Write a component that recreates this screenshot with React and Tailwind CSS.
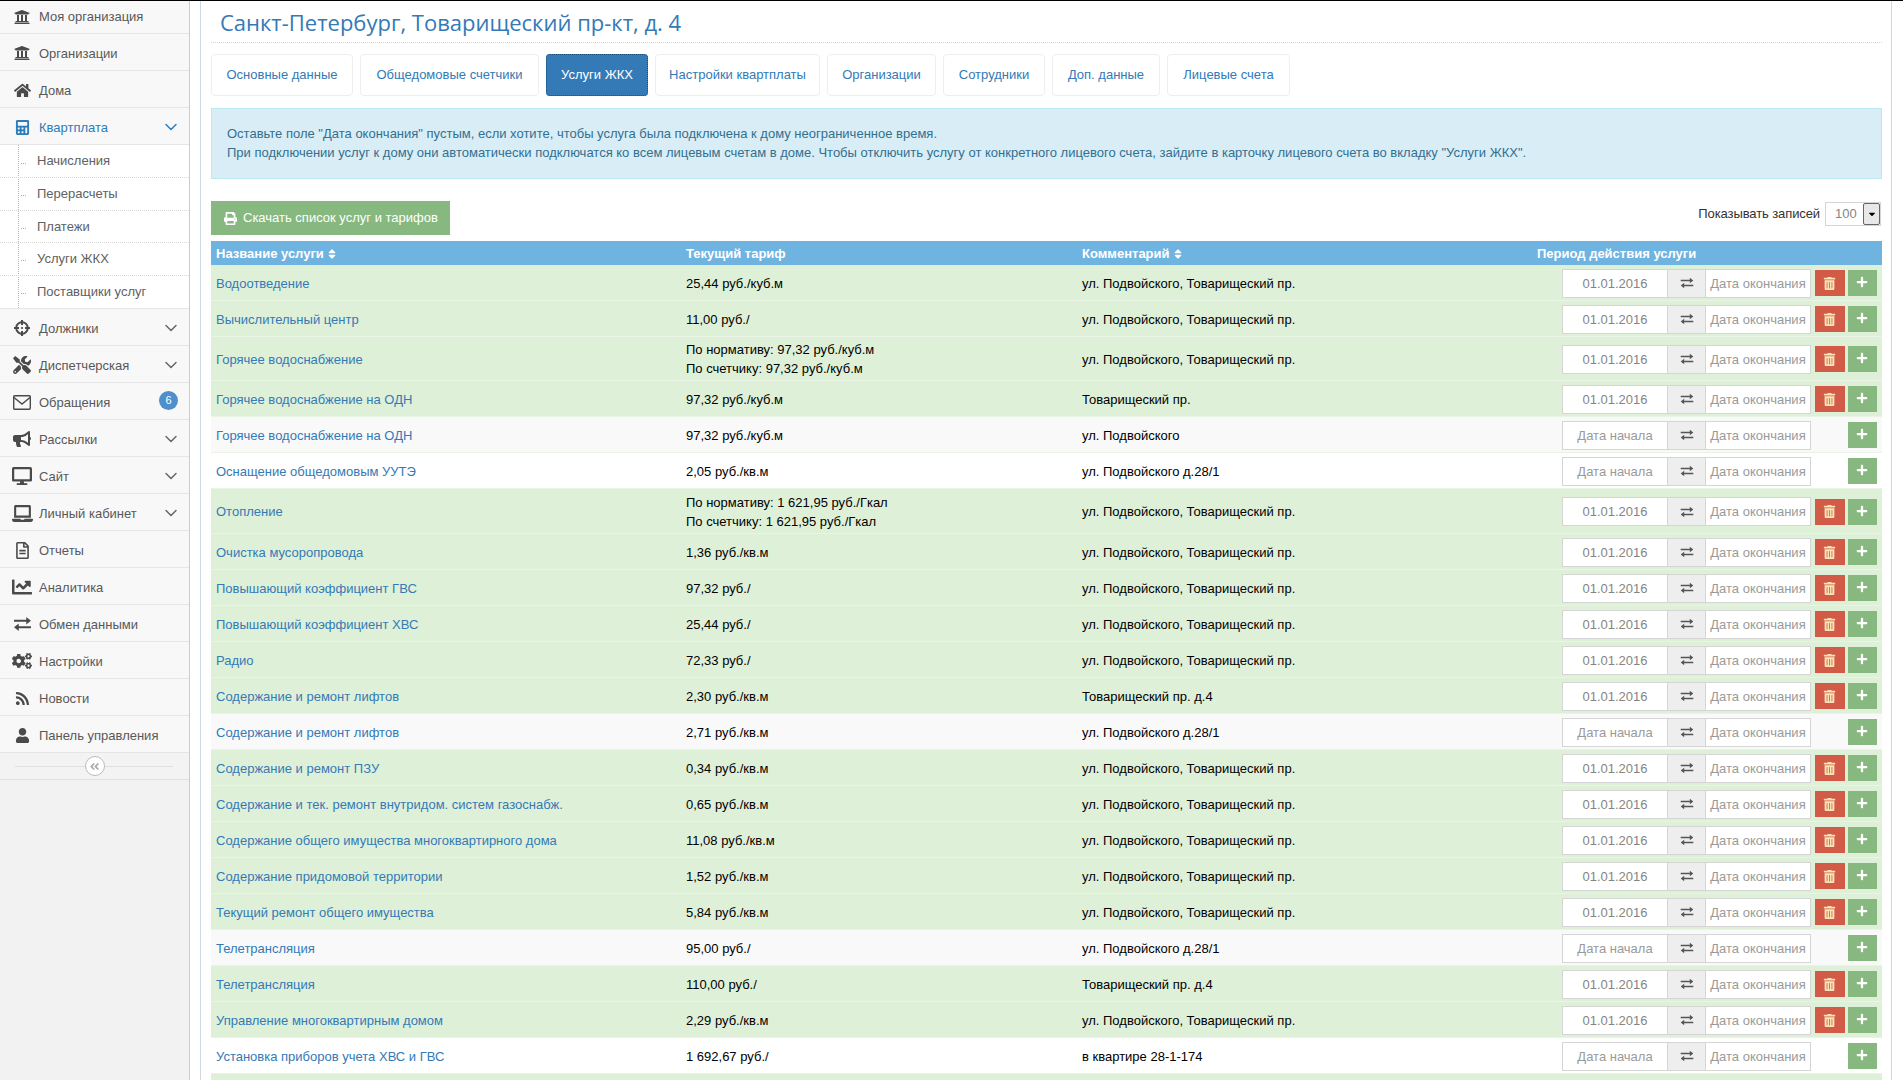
import React from 'react'
import { ChevronDown } from 'lucide-react'
import {
  FaUniversity, FaHome, FaCalculator, FaCrosshairs, FaTools, FaBullhorn,
  FaDesktop, FaLaptop, FaRegFileAlt, FaChartLine, FaCogs, FaRss, FaUser,
  FaPrint, FaTrashAlt, FaPlus, FaSort, FaAngleDoubleLeft, FaCaretDown,
} from 'react-icons/fa'

// fa-exchange из старого Font Awesome, в пакете такого нет
const ExchangeIcon = ({ className }) => (
  <svg viewBox="0 0 20 17" fill="currentColor" className={className}>
    <path d="M1 4h13V1l5 4-5 4V6H1z" />
    <path d="M19 11H6V8l-5 4 5 4v-3h13z" />
  </svg>
)

const EnvelopeIcon = ({ className }) => (
  <svg viewBox="0 0 18 15" fill="none" stroke="currentColor" strokeWidth="1.4" className={className}>
    <rect x="0.7" y="0.7" width="16.6" height="13.6" rx="1" />
    <path d="M1 2.5l8 6.5 8-6.5" />
  </svg>
)

const menuTop = [
  { label: 'Моя организация', icon: FaUniversity, size: 'text-[16px]', h: 'h-[33px]', first: true },
  { label: 'Организации', icon: FaUniversity, size: 'text-[16px]' },
  { label: 'Дома', icon: FaHome, size: 'text-[17px]' },
]

const subMenu = ['Начисления', 'Перерасчеты', 'Платежи', 'Услуги ЖКХ', 'Поставщики услуг']

const menuBottom = [
  { label: 'Должники', icon: FaCrosshairs, size: 'text-[16px]', arrow: true },
  { label: 'Диспетчерская', icon: FaTools, size: 'text-[18px]', arrow: true },
  { label: 'Обращения', icon: EnvelopeIcon, size: 'w-[18px] h-[15px]', badge: 6 },
  { label: 'Рассылки', icon: FaBullhorn, size: 'text-[18px]', arrow: true },
  { label: 'Сайт', icon: FaDesktop, size: 'text-[20px]', arrow: true },
  { label: 'Личный кабинет', icon: FaLaptop, size: 'text-[21px]', arrow: true },
  { label: 'Отчеты', icon: FaRegFileAlt, size: 'text-[17px]' },
  { label: 'Аналитика', icon: FaChartLine, size: 'text-[20px]' },
  { label: 'Обмен данными', icon: ExchangeIcon, size: 'w-[19px] h-[16px]' },
  { label: 'Настройки', icon: FaCogs, size: 'text-[20px]' },
  { label: 'Новости', icon: FaRss, size: 'text-[15px]' },
  { label: 'Панель управления', icon: FaUser, size: 'text-[15px]' },
]

const tabs = [
  { label: 'Основные данные', w: 'w-[142px]' },
  { label: 'Общедомовые счетчики', w: 'w-[179px]' },
  { label: 'Услуги ЖКХ', w: 'w-[102px]', active: true },
  { label: 'Настройки квартплаты', w: 'w-[165px]' },
  { label: 'Организации', w: 'w-[109px]' },
  { label: 'Сотрудники', w: 'w-[102px]' },
  { label: 'Доп. данные', w: 'w-[108px]' },
  { label: 'Лицевые счета', w: 'w-[123px]' },
]

const PV = 'ул. Подвойского, Товарищеский пр.'

// on = услуга подключена (зеленая строка)
const services = [
  { name: 'Водоотведение', tariff: ['25,44 руб./куб.м'], comment: PV, on: true, h: 'h-[35px]' },
  { name: 'Вычислительный центр', tariff: ['11,00 руб./'], comment: PV, on: true },
  { name: 'Горячее водоснабжение', tariff: ['По нормативу: 97,32 руб./куб.м', 'По счетчику: 97,32 руб./куб.м'], comment: PV, on: true, h: 'h-[44px]' },
  { name: 'Горячее водоснабжение на ОДН', tariff: ['97,32 руб./куб.м'], comment: 'Товарищеский пр.', on: true },
  { name: 'Горячее водоснабжение на ОДН', tariff: ['97,32 руб./куб.м'], comment: 'ул. Подвойского', bg: 'bg-[#f9f9f9]' },
  { name: 'Оснащение общедомовым УУТЭ', tariff: ['2,05 руб./кв.м'], comment: 'ул. Подвойского д.28/1', bg: 'bg-white' },
  { name: 'Отопление', tariff: ['По нормативу: 1 621,95 руб./Гкал', 'По счетчику: 1 621,95 руб./Гкал'], comment: PV, on: true, h: 'h-[45px]' },
  { name: 'Очистка мусоропровода', tariff: ['1,36 руб./кв.м'], comment: PV, on: true },
  { name: 'Повышающий коэффициент ГВС', tariff: ['97,32 руб./'], comment: PV, on: true },
  { name: 'Повышающий коэффициент ХВС', tariff: ['25,44 руб./'], comment: PV, on: true },
  { name: 'Радио', tariff: ['72,33 руб./'], comment: PV, on: true },
  { name: 'Содержание и ремонт лифтов', tariff: ['2,30 руб./кв.м'], comment: 'Товарищеский пр. д.4', on: true },
  { name: 'Содержание и ремонт лифтов', tariff: ['2,71 руб./кв.м'], comment: 'ул. Подвойского д.28/1', bg: 'bg-[#f9f9f9]' },
  { name: 'Содержание и ремонт ПЗУ', tariff: ['0,34 руб./кв.м'], comment: PV, on: true },
  { name: 'Содержание и тек. ремонт внутридом. систем газоснабж.', tariff: ['0,65 руб./кв.м'], comment: PV, on: true },
  { name: 'Содержание общего имущества многоквартирного дома', tariff: ['11,08 руб./кв.м'], comment: PV, on: true },
  { name: 'Содержание придомовой территории', tariff: ['1,52 руб./кв.м'], comment: PV, on: true },
  { name: 'Текущий ремонт общего имущества', tariff: ['5,84 руб./кв.м'], comment: PV, on: true },
  { name: 'Телетрансляция', tariff: ['95,00 руб./'], comment: 'ул. Подвойского д.28/1', bg: 'bg-[#f9f9f9]' },
  { name: 'Телетрансляция', tariff: ['110,00 руб./'], comment: 'Товарищеский пр. д.4', on: true },
  { name: 'Управление многоквартирным домом', tariff: ['2,29 руб./кв.м'], comment: PV, on: true },
  { name: 'Установка приборов учета ХВС и ГВС', tariff: ['1 692,67 руб./'], comment: 'в квартире 28-1-174', bg: 'bg-white' },
]

const MenuItem = ({ item }) => {
  const Icon = item.icon
  return (
    <a className={`flex items-center ${item.h || 'h-[37px]'} border-b border-[#e5e5e5] bg-[#f8f8f8] text-[#585858] relative`}>
      <span className={`w-[39px] shrink-0 flex justify-center text-[#4a4a4a] pl-[5px] ${item.first ? '' : 'pt-[2px]'}`}><Icon className={item.size} /></span>
      <span className={`flex-1 whitespace-nowrap ${item.first ? '' : 'pt-[3px]'}`}>{item.label}</span>
      {item.arrow && <ChevronDown className="absolute left-[161px] top-[9px] w-[20px] h-[20px] text-[#666]" strokeWidth={1.75} />}
      {item.badge && (
        <span className="absolute left-[159px] top-[8px] w-[19px] h-[19px] rounded-full bg-[#4f8fcb] text-white text-[11px] flex items-center justify-center">{item.badge}</span>
      )}
    </a>
  )
}

const Sidebar = () => (
  <aside className="w-[190px] shrink-0 bg-[#f2f2f2] border-r border-[#cccccc] text-[13px]">
    {menuTop.map(item => <MenuItem key={item.label} item={item} />)}
    <a className="flex items-center h-[37px] border-b border-[#e5e5e5] bg-[#f8f8f8] text-[#2b7dbc] relative">
      <span className="w-[39px] shrink-0 flex justify-center text-[#2b7dbc] text-[15px] pl-[5px] pt-[2px]"><FaCalculator /></span>
      <span className="pt-[3px]">Квартплата</span>
      <ChevronDown className="absolute left-[161px] top-[9px] w-[20px] h-[20px] text-[#2b7dbc]" strokeWidth={1.75} />
    </a>
    <ul className="bg-white border-b border-[#e5e5e5] relative">
      <span className="absolute left-[18px] top-0 bottom-0 border-l border-dotted border-[#9dbdd6]"></span>
      {subMenu.map((s, i) => (
        <li key={s} className={`flex items-center ${i === 0 ? 'h-[33px]' : 'h-[32.5px]'} pl-[37px] text-[#616161] border-b border-dotted border-[#d8d8d8] last:border-b-0 relative`}>
          <span className="absolute left-[21px] top-[55%] w-[5px] border-t border-dotted border-[#aaaaaa]"></span>
          {s}
        </li>
      ))}
    </ul>
    {menuBottom.map(item => <MenuItem key={item.label} item={item} />)}
    <div className="h-[27px] border-b border-[#e0e0e0] bg-[#f3f3f3] relative flex items-center justify-center">
      <span className="absolute left-[15px] right-[16px] top-1/2 border-t border-[#e0e0e0]"></span>
      <span className="relative w-[20px] h-[20px] rounded-full bg-white border border-[#bbbbbb] text-[#aaaaaa] text-[11px] flex items-center justify-center"><FaAngleDoubleLeft /></span>
    </div>
  </aside>
)

const DateRange = ({ on }) => (
  <div className="flex h-[29px] w-[249px] text-[13px] text-[#9a9a9a] border border-[#d5d5d5] bg-white">
    <div className={`w-[104px] flex items-center justify-center ${on ? 'text-[#858585]' : ''}`}>{on ? '01.01.2016' : 'Дата начала'}</div>
    <div className="w-[39px] bg-[#eeeeee] border-x border-[#d5d5d5] flex items-center justify-center text-[#555555]"><ExchangeIcon className="w-[14px] h-[12px]" /></div>
    <div className="flex-1 flex items-center justify-center whitespace-nowrap">Дата окончания</div>
  </div>
)

const ServiceRow = ({ row }) => (
  <tr className={`${row.on ? 'bg-[#dff0d8]' : row.bg} border-b border-[#e9f4e4] leading-[19px]`}>
    <td className={`pl-[5px] pt-[2px] text-[#337ab7] ${row.h || 'h-[36px]'}`}>{row.name}</td>
    <td className="text-black pt-[2px]">
      {row.tariff.map(t => <div key={t}>{t}</div>)}
    </td>
    <td className="text-black pt-[2px]">{row.comment}</td>
    <td className="pt-[2px]">
      <div className="flex items-center justify-end pr-[5px]">
        <DateRange on={row.on} />
        {row.on ? (
          <button className="ml-[4px] w-[30px] h-[26px] bg-[#d15b47] flex items-center justify-center text-[#fbe3b8] text-[13px] pr-[2px]"><FaTrashAlt /></button>
        ) : (
          <span className="ml-[4px] w-[30px]"></span>
        )}
        <button className="ml-[3px] w-[29px] h-[26px] bg-[#87b87f] flex items-center justify-center text-white text-[12px] pb-[2px] pr-[2px]"><FaPlus /></button>
      </div>
    </td>
  </tr>
)

const ServicesTable = () => (
  <table className="w-full table-fixed border-collapse text-[13px]">
    <colgroup>
      <col className="w-[475px]" />
      <col className="w-[396px]" />
      <col className="w-[455px]" />
      <col className="w-[345px]" />
    </colgroup>
    <thead>
      <tr className="bg-[#6fb3e0] text-white font-bold h-[24px] text-left">
        <th className="pl-[5px] pt-[2px] font-bold"><span className="inline-flex items-center gap-[2px]">Название услуги <FaSort className="text-[12px]" /></span></th>
        <th className="pt-[2px] font-bold">Текущий тариф</th>
        <th className="pt-[2px] font-bold"><span className="inline-flex items-center gap-[2px]">Комментарий <FaSort className="text-[12px]" /></span></th>
        <th className="pt-[2px] font-bold">Период действия услуги</th>
      </tr>
    </thead>
    <tbody>
      {services.map((row, i) => <ServiceRow key={i} row={row} />)}
      <tr className="bg-[#dff0d8] h-[36px]"><td colSpan={4}></td></tr>
    </tbody>
  </table>
)

export default function App() {
  return (
    <div className="h-[1080px] overflow-hidden bg-white border-t border-black flex font-['Liberation_Sans',sans-serif] text-[13px]">
      <Sidebar />
      <main className="ml-[10px] w-[1692px] shrink-0 border-x border-[#cfd8e0] pl-[10px] pr-[9px]">
        <h1 className="h-[42px] border-b border-dotted border-[#d5d5d5] pl-[9px] pt-[5px] font-['Open_Sans',sans-serif] text-[22px] leading-[32px] text-[#337ab7]">Санкт-Петербург, Товарищеский пр-кт, д. 4</h1>
        <div className="flex gap-[7px] mt-[11px]">
          {tabs.map(t => (
            <a key={t.label} className={`${t.w} h-[42px] flex items-center justify-center rounded-[4px] whitespace-nowrap ${t.active ? 'bg-[#337ab7] text-white outline-1 outline-dotted outline-[#1d4f7a] -outline-offset-1' : 'border border-[#eeeeee] text-[#337ab7]'}`}>{t.label}</a>
          ))}
        </div>
        <div className="mt-[12px] h-[71px] bg-[#d9edf7] border border-[#bce8f1] text-[#31708f] px-[15px] pt-[15px] leading-[19px]">
          <p>Оставьте поле "Дата окончания" пустым, если хотите, чтобы услуга была подключена к дому неограниченное время.</p>
          <p>При подключении услуг к дому они автоматически подключатся ко всем лицевым счетам в доме. Чтобы отключить услугу от конкретного лицевого счета, зайдите в карточку лицевого счета во вкладку "Услуги ЖКХ".</p>
        </div>
        <div className="mt-[22px] h-[40px] flex justify-between items-start">
          <button className="h-[34px] w-[239px] bg-[#87b87f] text-white flex items-center pl-[13px] gap-[6px]"><FaPrint className="text-[13px]" />Скачать список услуг и тарифов</button>
          <div className="flex items-center mt-[1px] mr-px text-[#333333]">
            <span className="mr-[5px] tracking-[-0.1px]">Показывать записей</span>
            <div className="w-[56px] h-[24px] border border-[#d5d5d5] flex items-center text-[#858585] pl-[9px] relative">
              100
              <span className="absolute right-0 top-0 w-[17px] h-[22px] bg-[#e8e8e8] border border-[#666666] rounded-[2px] flex items-center justify-center text-black text-[10px]"><FaCaretDown /></span>
            </div>
          </div>
        </div>
        <ServicesTable />
      </main>
    </div>
  )
}
